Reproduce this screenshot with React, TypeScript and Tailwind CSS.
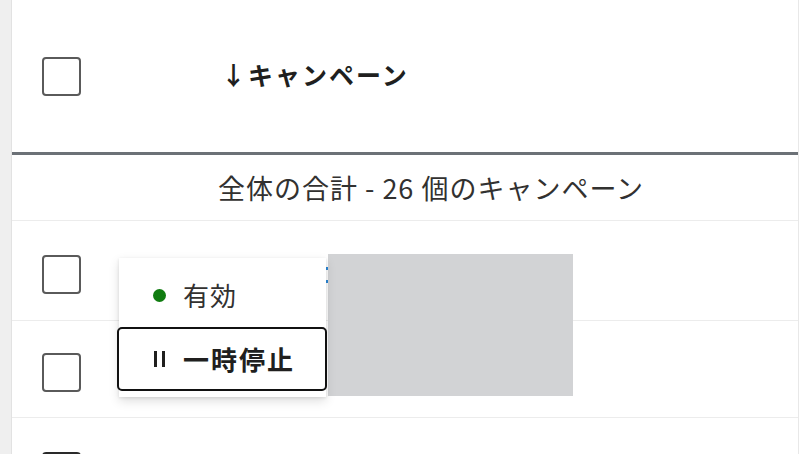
import React from "react";

const Checkbox = () => (
  <div className="w-[39px] h-[39px] rounded-[4px] border-2 border-[#5a5a5a] bg-white shrink-0" />
);

const PauseIcon = () => (
  <svg width="14" height="18" viewBox="0 0 14 18" className="shrink-0">
    <rect x="1" y="1" width="3" height="16" fill="#201f1e" />
    <rect x="9" y="1" width="3" height="16" fill="#201f1e" />
  </svg>
);

export default function App() {
  return (
    <div
      className="relative w-[804px] h-[454px] overflow-hidden flex bg-white text-[#323130]"
      style={{ fontFamily: '"Noto Sans CJK JP", "Noto Sans", sans-serif' }}
    >
      {/* left gutter */}
      <div className="w-[12px] bg-[#efefef] border-r border-[#e2e2e2] shrink-0" />

      {/* table */}
      <div className="w-[787px] border-r border-[#e8e8e8] shrink-0 flex flex-col">
        <div className="h-[152px] flex items-center pl-[30px] shrink-0">
          <Checkbox />
          <span className="ml-[140px] -mt-[4px] text-[25px] font-bold text-[#201f1e] leading-none tracking-[2px]">
            ↓キャンペーン
          </span>
        </div>
        <div className="h-[3px] bg-[#6c7177] shrink-0" />
        <div className="h-[66px] flex items-center justify-center pl-[52px] border-b border-[#ececec] shrink-0">
          <span className="text-[27px] leading-none tracking-[1px]">全体の合計 - 26 個のキャンペーン</span>
        </div>
        <div className="h-[100px] pl-[30px] pt-[34px] border-b border-[#ececec] shrink-0">
          <Checkbox />
        </div>
        <div className="h-[97px] pl-[30px] pt-[32px] border-b border-[#ececec] shrink-0">
          <Checkbox />
        </div>
        <div className="h-[80px] pl-[30px] pt-[34px] shrink-0">
          <div className="w-[39px] h-[39px] rounded-[4px] border-2 border-[#2a2a2a] bg-white" />
        </div>
      </div>
      <div className="flex-1 bg-white" />

      {/* focus dashes peeking from behind the menu */}
      <span className="absolute left-[325px] top-[267px] w-[3px] h-[3px] bg-[#2b88d8]" />
      <span className="absolute left-[325px] top-[280px] w-[3px] h-[3px] bg-[#2b88d8]" />

      {/* placeholder block */}
      <div className="absolute left-[328px] top-[254px] w-[245px] h-[142px] bg-[#d2d3d5]" />

      {/* status menu */}
      <div className="absolute left-[119px] top-[258px] w-[207px] h-[139px] bg-white shadow-[0_4px_10px_rgba(0,0,0,0.13),0_1px_3px_rgba(0,0,0,0.1)] flex flex-col">
        <div className="h-[69px] flex items-center pl-[34px] pt-[5px] gap-[17px]">
          <span className="w-[13px] h-[13px] rounded-full bg-[#107c10]" />
          <span className="text-[26px] leading-none tracking-[1px]">有効</span>
        </div>
        <div className="-ml-[2px] w-[210px] h-[64px] border-2 border-[#111] rounded-[5px] flex items-center pl-[34px] gap-[16px] bg-white">
          <PauseIcon />
          <span className="text-[26px] font-bold leading-none tracking-[2px] text-[#201f1e]">一時停止</span>
        </div>
      </div>
    </div>
  );
}
